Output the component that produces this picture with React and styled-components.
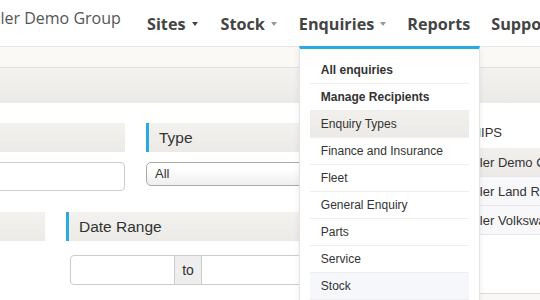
import React from "react";
import styled, { createGlobalStyle } from "styled-components";

const GlobalStyle = createGlobalStyle`
  body {
    margin: 0;
    background: #fff;
    font-family: "Liberation Sans", Arial, sans-serif;
    color: #333;
  }
`;

const Page = styled.div`
  width: 540px;
  height: 300px;
  overflow: hidden;
`;

const Navbar = styled.header`
  height: 46px;
  display: flex;
  border-bottom: 1px solid #e8e6e0;
  font-family: "Open Sans", sans-serif;
  background: #fff;
  position: relative;
  z-index: 5;
`;

const Brand = styled.div`
  flex: 0 0 176px;
  margin-left: -29px;
  padding-top: 7px;
  font-size: 16px;
  color: #555;
  white-space: nowrap;
`;

const NavList = styled.nav`
  display: flex;
  gap: 21px;
`;

const NavItem = styled.div`
  position: relative;
  display: flex;
  align-items: center;
  padding-top: 1px;
  font-size: 16.2px;
  font-weight: 700;
  color: #444;
  white-space: nowrap;
  margin-right: ${(p) => p.$extra || 0}px;
`;

const Caret = styled.span`
  display: inline-block;
  margin-left: 6px;
  border-top: 4px solid ${(p) => (p.$muted ? "#999" : "#444")};
  border-left: 3.5px solid transparent;
  border-right: 3.5px solid transparent;
`;

const Dropdown = styled.div`
  position: absolute;
  top: 100%;
  left: 0;
  width: 181px;
  box-sizing: border-box;
  padding: 8px 10px;
  background: #fff;
  border: 1px solid #e4e4e4;
  border-top: 3px solid #29abe2;
  box-shadow: 0 3px 6px rgba(0, 0, 0, 0.08);
  font-family: "Liberation Sans", Arial, sans-serif;
  font-weight: 400;
`;

const MenuItem = styled.div`
  height: 26px;
  line-height: 26px;
  padding-left: 11px;
  border-bottom: 1px solid #eeeeee;
  font-size: 12px;
  font-weight: ${(p) => (p.$bold ? 700 : 400)};
  color: #333;
  background: ${(p) =>
    p.$active
      ? "linear-gradient(#f1f0ed, #ebeae6)"
      : p.$hover
      ? "#f6f7fb"
      : "transparent"};
`;

const SubBar = styled.div`
  height: 20px;
  background: #faf9f5;
  border-bottom: 1px solid #e2e0db;
`;

const Band = styled.div`
  height: 35px;
  background: linear-gradient(#f3f2ef, #ebeae6);
`;

const Content = styled.main`
  display: flex;
  gap: 20px;
  padding-top: 14px;
`;

const Form = styled.div`
  flex: 0 0 578px;
  margin-left: -200px;
  padding-top: 6px;
`;

const FormRow = styled.div`
  display: flex;
  gap: 21px;
  margin-bottom: 21px;
`;

const Field = styled.div`
  flex: 0 0 ${(p) => p.$width}px;
  display: flex;
  flex-direction: column;
`;

const SectionHeader = styled.div`
  height: 29px;
  line-height: 29px;
  padding-left: 10px;
  background: linear-gradient(#f3f2ef, #ebeae6);
  border-left: ${(p) => (p.$accent ? "3px solid #29abe2" : "none")};
  font-size: 15.5px;
  color: #333;
`;

const TextInput = styled.div`
  height: 27px;
  margin-top: 10px;
  border: 1px solid #cccccc;
  border-radius: 4px;
  background: #fff;
`;

const Select = styled.div`
  height: 22px;
  line-height: 22px;
  margin-top: 10px;
  padding-left: 8px;
  border: 1px solid #aaaaaa;
  border-radius: 5px;
  background: linear-gradient(#ffffff 30%, #eeeeee);
  font-size: 13px;
  color: #333;
`;

const InputGroup = styled.div`
  display: flex;
  height: 30px;
  margin: 14px 0 0 4px;
  border: 1px solid #cccccc;
  border-radius: 4px;
  box-sizing: border-box;
  background: #fff;
`;

const GroupInput = styled.div`
  flex: 0 0 ${(p) => p.$width}px;
`;

const Addon = styled.div`
  flex: 0 0 26px;
  border-left: 1px solid #cccccc;
  border-right: 1px solid #cccccc;
  background: #eeeeee;
  text-align: center;
  line-height: 28px;
  font-size: 14px;
  color: #333;
`;

const Side = styled.aside`
  flex: 0 0 240px;
`;

const Table = styled.table`
  width: 100%;
  border-collapse: collapse;
  font-size: 13px;
  color: #333;
`;

const Th = styled.th`
  height: 31px;
  padding: 0 8px 0 13px;
  text-align: left;
  font-weight: 400;
  text-transform: uppercase;
`;

const Tr = styled.tr`
  background: ${(p) =>
    p.$selected ? "linear-gradient(#f1f0ed, #ebeae6)" : "#f8f8fb"};
  border-bottom: 1px solid #e6e6e6;
`;

const Td = styled.td`
  height: 28px;
  padding: 0 0 0 6px;
  white-space: nowrap;
  width: ${(p) => (p.$narrow ? "46px" : "auto")};
`;

const Footer = styled.div`
  margin-top: 58px;
  height: 40px;
  border-top: 1px solid #e0ded9;
  background: #f9f8f4;
`;

const enquiryMenu = [
  { label: "All enquiries", bold: true },
  { label: "Manage Recipients", bold: true },
  { label: "Enquiry Types", active: true },
  { label: "Finance and Insurance" },
  { label: "Fleet" },
  { label: "General Enquiry" },
  { label: "Parts" },
  { label: "Service" },
  { label: "Stock", hover: true },
];

const dealers = ["Dealer Demo Group", "Dealer Land Rover", "Dealer Volkswagen"];

export default function App() {
  return (
    <Page>
      <GlobalStyle />
      <Navbar>
        <Brand>Dealer Demo Group</Brand>
        <NavList>
          <NavItem $extra={2}>
            Sites <Caret />
          </NavItem>
          <NavItem $extra={1}>
            Stock <Caret $muted />
          </NavItem>
          <NavItem>
            Enquiries <Caret $muted />
            <Dropdown>
              {enquiryMenu.map((item) => (
                <MenuItem
                  key={item.label}
                  $bold={item.bold}
                  $active={item.active}
                  $hover={item.hover}
                >
                  {item.label}
                </MenuItem>
              ))}
            </Dropdown>
          </NavItem>
          <NavItem>Reports</NavItem>
          <NavItem>Support</NavItem>
        </NavList>
      </Navbar>
      <SubBar />
      <Band />
      <Content>
        <Form>
          <FormRow>
            <Field $width={325}>
              <SectionHeader>Name</SectionHeader>
              <TextInput />
            </Field>
            <Field $width={232}>
              <SectionHeader $accent>Type</SectionHeader>
              <Select>All</Select>
            </Field>
          </FormRow>
          <FormRow>
            <Field $width={245}>
              <SectionHeader>Status</SectionHeader>
            </Field>
            <Field $width={312}>
              <SectionHeader $accent>Date Range</SectionHeader>
              <InputGroup>
                <GroupInput $width={103} />
                <Addon>to</Addon>
                <GroupInput $width={160} />
              </InputGroup>
            </Field>
          </FormRow>
        </Form>
        <Side>
          <Table>
            <thead>
              <tr>
                <Th colSpan={2}>Dealerships</Th>
              </tr>
            </thead>
            <tbody>
              {dealers.map((name, i) => (
                <Tr key={name} $selected={i === 0}>
                  <Td $narrow />
                  <Td>{name}</Td>
                </Tr>
              ))}
            </tbody>
          </Table>
          <Footer />
        </Side>
      </Content>
    </Page>
  );
}
